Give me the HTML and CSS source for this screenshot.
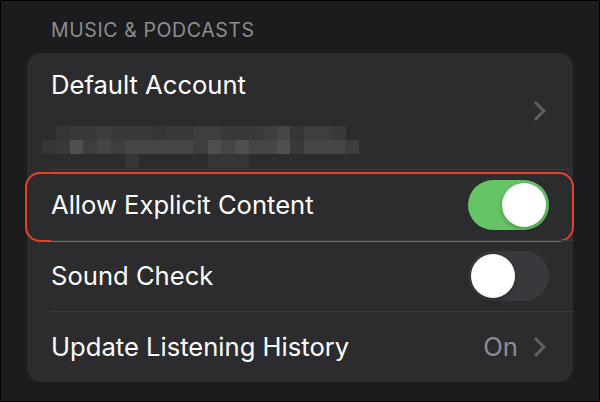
FILE: index.html
```html
<!DOCTYPE html>
<html lang="en">
<head>
    <meta charset="UTF-8">
    <meta name="viewport" content="width=device-width, initial-scale=1.0">
    <title>Music &amp; Podcasts</title>
    <link rel="stylesheet" href="styles.css">
</head>
<body>
    <div class="screen">
        <div class="section-title">MUSIC &amp; PODCASTS</div>

        <div class="card">
            <div class="row row-account">
                <div class="row-main">
                    <div class="label">Default Account</div>
                    <div class="blur">
                        <span></span><span class="s1"></span><span class="s2"></span><span class="s2"></span><span class="s3"></span><span class="s2"></span><span class="s2"></span><span class="s2"></span><span class="s1"></span><span class="s2"></span><span class="s2"></span><span class="s3"></span><span class="s3"></span><span class="s2"></span><span class="s2"></span><span class="s2"></span><span class="s3"></span><span class="s4"></span><span class="s1"></span><span class="s3"></span><span class="s3"></span><span class="s2"></span><span></span>
                        <span class="s1"></span><span class="s2"></span><span class="s5"></span><span class="s3"></span><span class="s4"></span><span class="s3"></span><span class="s4"></span><span class="s4"></span><span class="s4"></span><span class="s4"></span><span class="s4"></span><span class="s3"></span><span class="s5"></span><span class="s4"></span><span class="s5"></span><span class="s4"></span><span class="s4"></span><span class="s5"></span><span class="s2"></span><span class="s4"></span><span class="s4"></span><span class="s4"></span><span class="s3"></span>
                        <span></span><span></span><span></span><span></span><span></span><span></span><span class="s1"></span><span></span><span></span><span></span><span></span><span></span><span class="s1"></span><span class="s1"></span><span class="s1"></span>
                    </div>
                </div>
                <span class="chevron"></span>
            </div>

            <div class="row row-highlight">
                <div class="label">Allow Explicit Content</div>
                <div class="switch on"><span class="knob"></span></div>
            </div>

            <div class="row">
                <div class="label">Sound Check</div>
                <div class="switch"><span class="knob"></span></div>
            </div>

            <div class="row">
                <div class="label">Update Listening History</div>
                <div class="row-value">
                    <span class="value">On</span>
                    <span class="chevron"></span>
                </div>
            </div>
        </div>
    </div>
</body>
</html>
```

FILE: styles.css
```css
body {
    margin: 0;
    font-family: 'Inter', 'Liberation Sans', sans-serif;
    background-color: #000000;
}

.screen {
    width: 600px;
    height: 402px;
    box-sizing: border-box;
    border: 1px solid #000000;
    background-color: #1c1c1e;
    padding: 17px 26px 0 26px;
}

.section-title {
    color: #8d8d92;
    font-size: 19.5px;
    line-height: 24px;
    padding-left: 24px;
    margin-bottom: 11px;
    letter-spacing: 0.6px;
}

.card {
    background-color: #2c2c2e;
    border-radius: 14px;
    padding-left: 24px;
}

.row {
    position: relative;
    display: flex;
    align-items: center;
    justify-content: space-between;
    height: 70px;
    padding-right: 24px;
    border-top: 1px solid #3b3b3e;
}

.row:first-child {
    border-top: none;
}

.row-account {
    height: 116px;
}

.row-main {
    display: flex;
    flex-direction: column;
    padding-top: 15px;
}

.label {
    color: #ffffff;
    font-size: 25.6px;
    line-height: 30px;
}

/* pixelated account e-mail */
.blur {
    display: grid;
    grid-template-columns: repeat(23, 13.8px);
    grid-auto-rows: 14px;
    margin-left: -9px;
    margin-top: 26px;
}

.blur .s1 { background-color: #363638; }
.blur .s2 { background-color: #39393b; }
.blur .s3 { background-color: #3e3e40; }
.blur .s4 { background-color: #454547; }
.blur .s5 { background-color: #4f4f51; }

.chevron {
    display: inline-block;
    width: 11px;
    height: 11px;
    border-top: 3px solid #5f5f63;
    border-right: 3px solid #5f5f63;
    transform: rotate(45deg);
    margin-right: 6px;
}

.row-value {
    display: flex;
    align-items: center;
    gap: 11px;
}

.value {
    color: #8d8d92;
    font-size: 25.6px;
    line-height: 30px;
}

.row-highlight::after {
    content: "";
    position: absolute;
    left: -26px;
    right: -1px;
    top: 2px;
    bottom: -2px;
    border: 2.5px solid #e8412b;
    border-radius: 15px;
}

.switch {
    width: 81px;
    height: 50px;
    border-radius: 25px;
    background-color: #39393d;
    padding: 3px;
    box-sizing: border-box;
    display: flex;
}

.switch .knob {
    width: 44px;
    height: 44px;
    border-radius: 50%;
    background-color: #ffffff;
    box-shadow: 0 2px 5px rgba(0, 0, 0, 0.25);
}

.switch.on {
    background-color: #65c466;
    justify-content: flex-end;
}
```
